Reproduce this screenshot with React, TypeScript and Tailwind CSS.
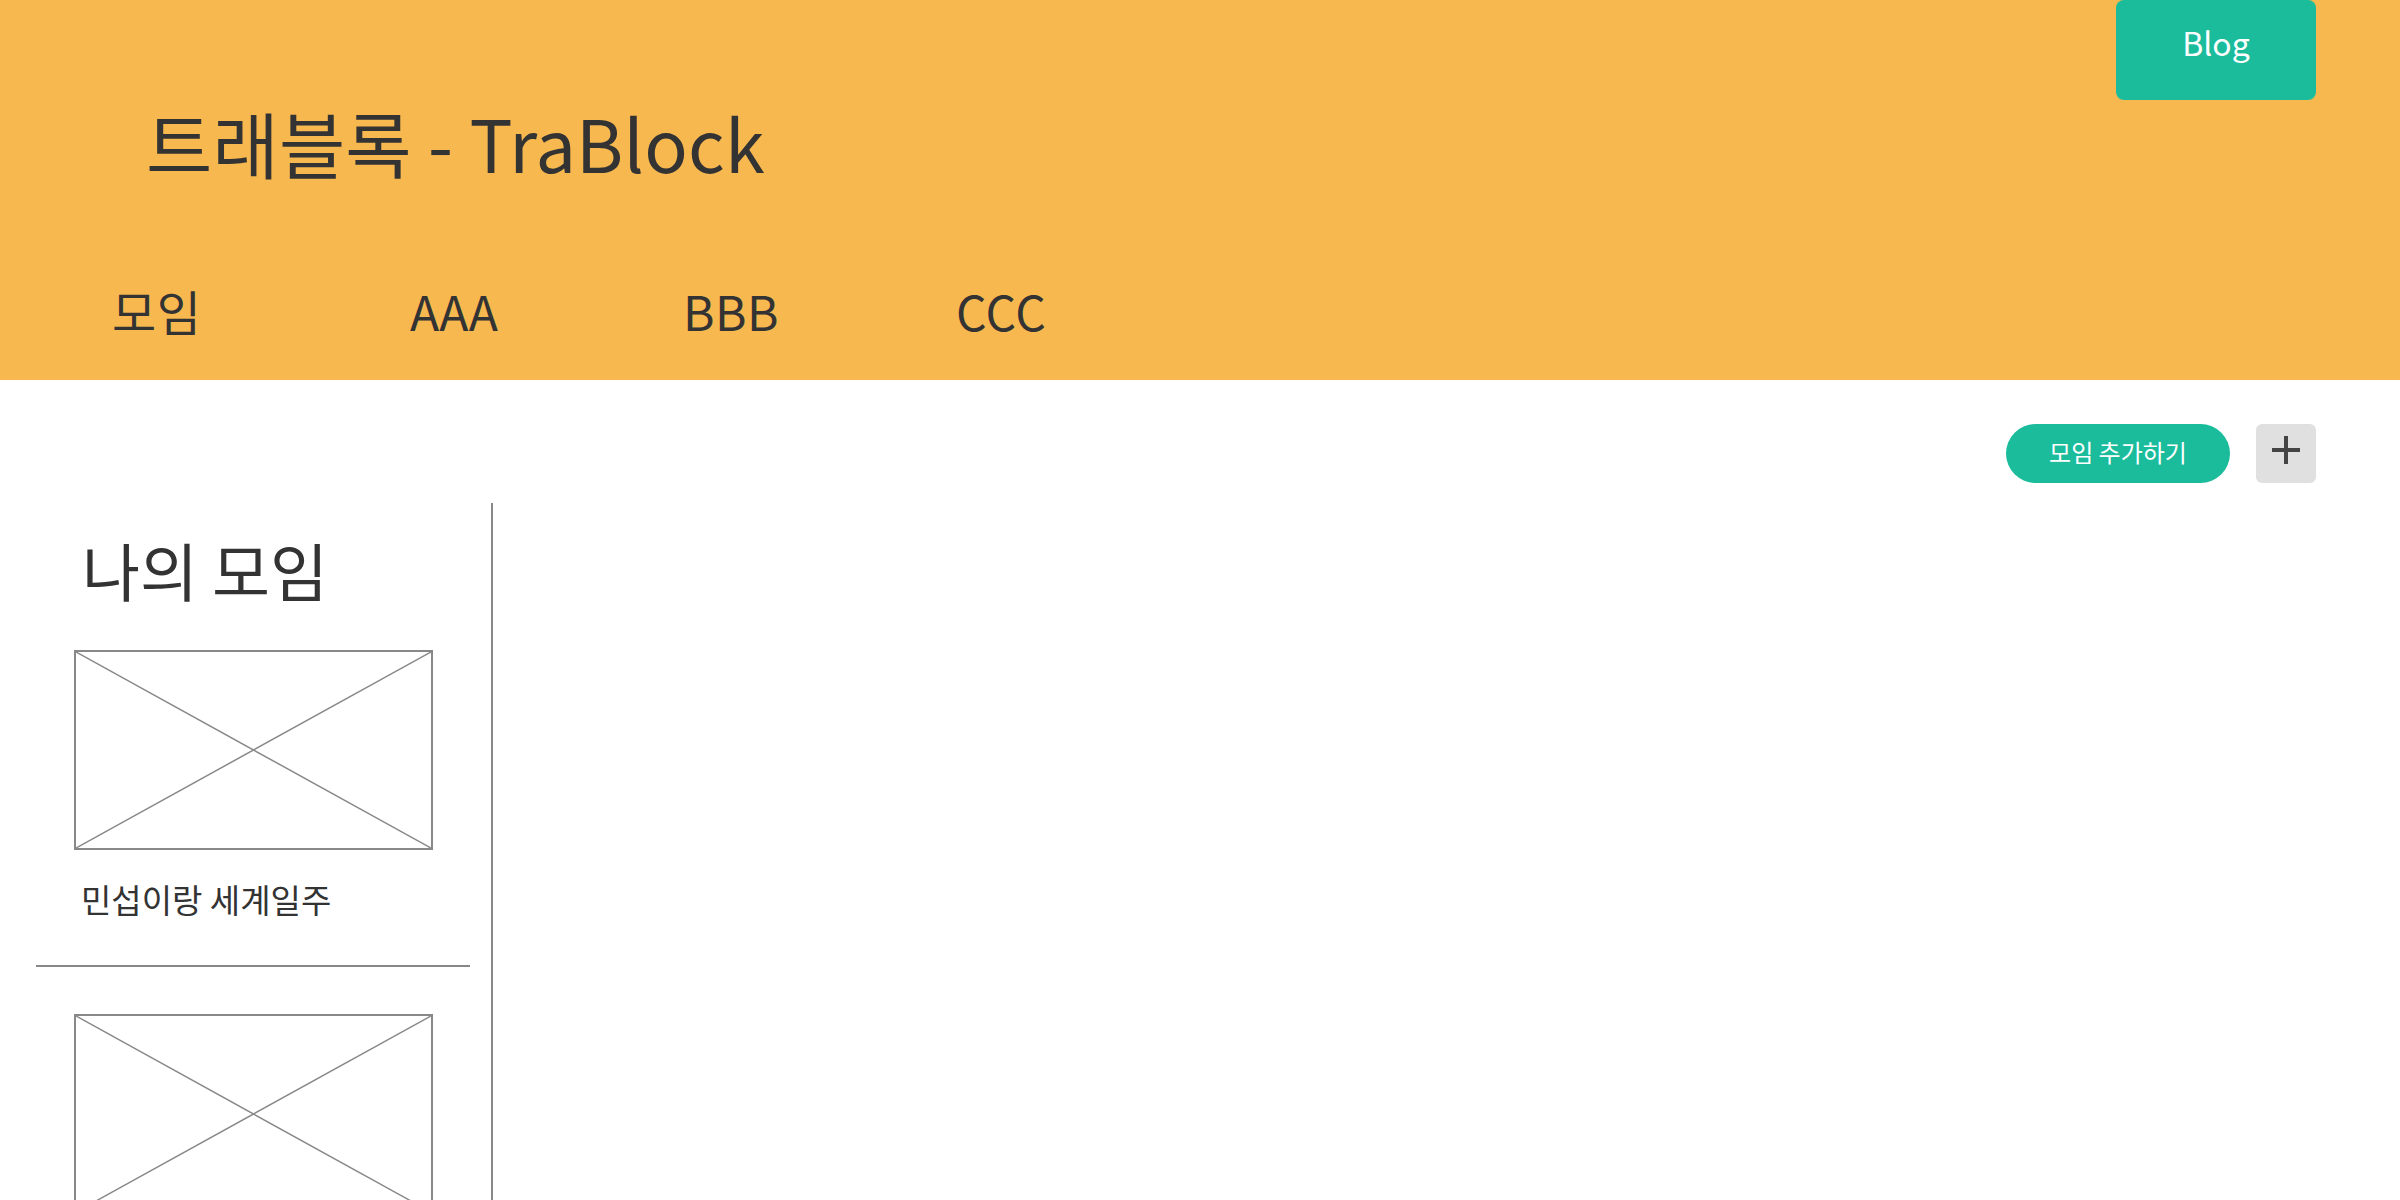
import React from "react";

const font = { fontFamily: '"Noto Sans CJK KR", "Noto Sans", sans-serif' };

const navItems = [
  { label: "모임", width: "w-[298px]" },
  { label: "AAA", width: "w-[273px]" },
  { label: "BBB", width: "w-[273px]" },
  { label: "CCC", width: "w-[200px]" },
];

const Placeholder = () => (
  <div className="relative ml-[38px] h-[200px] w-[359px] border-2 border-[#888888]">
    <svg className="absolute inset-0 h-full w-full" viewBox="0 0 100 100" preserveAspectRatio="none">
      <line x1="0" y1="0" x2="100" y2="100" stroke="#888888" strokeWidth="1.5" vectorEffect="non-scaling-stroke" />
      <line x1="100" y1="0" x2="0" y2="100" stroke="#888888" strokeWidth="1.5" vectorEffect="non-scaling-stroke" />
    </svg>
  </div>
);

export default function App() {
  return (
    <div className="min-h-screen w-full overflow-hidden bg-white text-[#333333]" style={font}>
      {/* Header */}
      <header className="flex h-[380px] flex-col bg-[#f8b850]">
        <div className="flex justify-end pr-[84px]">
          <button className="flex h-[100px] w-[200px] items-start justify-center rounded-lg bg-[#1abc9c] pt-[26px] text-[32px] leading-none text-white">
            Blog
          </button>
        </div>
        <h1 className="ml-[146px] mt-[6px] text-[72px] font-normal leading-none tracking-[0.2px]">트래블록 - TraBlock</h1>
        <nav className="mt-[108px] flex pl-[112px]">
          {navItems.map((item) => (
            <a key={item.label} className={`${item.width} text-[48px] leading-none tracking-[0.5px]`}>
              {item.label}
            </a>
          ))}
        </nav>
      </header>

      {/* Actions */}
      <div className="mt-[44px] flex justify-end gap-[26px] pr-[84px]">
        <button className="flex h-[59px] w-[224px] items-center justify-center rounded-full bg-[#1abc9c] pb-[4px] text-[24px] leading-none text-white">
          모임 추가하기
        </button>
        <button className="flex h-[59px] w-[60px] items-center justify-center rounded-md bg-[#e0e0e0]">
          <svg width="28" height="28" viewBox="0 0 28 28" className="-translate-y-[4px]">
            <line x1="0" y1="14" x2="28" y2="14" stroke="#444444" strokeWidth="4" />
            <line x1="14" y1="0" x2="14" y2="28" stroke="#444444" strokeWidth="4" />
          </svg>
        </button>
      </div>

      {/* Main */}
      <div className="mt-[20px] flex">
        <aside className="min-h-[700px] w-[493px] border-r-2 border-[#888888] pl-[36px] pr-[21px] pt-[34px]">
          <h2 className="ml-[46px] text-[63px] font-normal leading-none">나의 모임</h2>
          <div className="mt-[50px] border-b-2 border-[#888888] pb-[49px]">
            <Placeholder />
            <p className="ml-[45px] mt-[33px] text-[33px] leading-none">민섭이랑 세계일주</p>
          </div>
          <div className="mt-[47px] pb-[49px]">
            <Placeholder />
          </div>
        </aside>
        <section className="flex-1" />
      </div>
    </div>
  );
}
